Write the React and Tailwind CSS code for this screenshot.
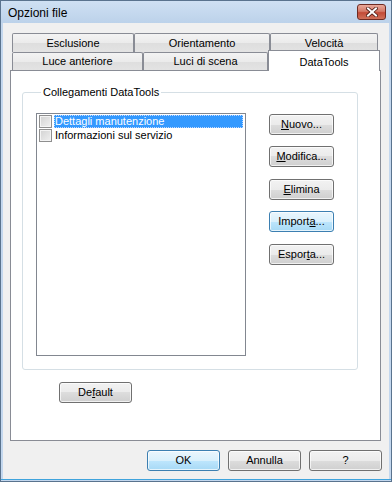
import React from "react";

const font = "font-['Liberation_Sans',Arial,sans-serif]";

const btnBase =
  "h-[21px] rounded-[3px] border text-[11px] leading-none text-black flex items-center justify-center shadow-[inset_0_0_0_1px_rgba(255,255,255,0.7)]";
const btnNormal =
  "border-[#707070] bg-[linear-gradient(#f2f2f2_0%,#ebebeb_50%,#dddddd_50%,#cfcfcf_100%)]";
const btnFocus =
  "border-[#3c7fb1] bg-[linear-gradient(#eaf6fd_0%,#d9f0fc_50%,#bee6fd_50%,#a7d9f5_100%)]";

const Btn = ({ children, focus, className = "" }) => (
  <div className={`${btnBase} ${focus ? btnFocus : btnNormal} ${className}`}>{children}</div>
);

const tabInactive =
  "h-full flex items-center justify-center border-t border-l border-r border-[#898c95] rounded-t-[2px] bg-[linear-gradient(#f3f3f3_0%,#ebebeb_50%,#dedede_50%,#e3e3e3_100%)] text-[11px] text-black";

const Check = () => (
  <div className="w-[13px] h-[13px] border border-[#8f8f8f] bg-[linear-gradient(135deg,#d2d2d2,#f0f0f0)] shadow-[inset_0_0_0_1px_#f4f4f4]" />
);

export default function App() {
  return (
    <div className={`w-[392px] h-[482px] border border-[#5a738e] bg-[#c3d7ee] flex flex-col ${font}`}>
      {/* Title bar */}
      <div className="h-[22px] flex items-start justify-between pl-[7px] pr-[5px] bg-[linear-gradient(#cfe0f3,#bcd2ea)]">
        <span className="text-[12px] leading-none mt-[6px] text-black">Opzioni file</span>
        <div className="mt-[3px] w-[29px] h-[16px] rounded-[3px] border border-[#6f2b22] bg-[linear-gradient(#e9a99a_0%,#d47a68_45%,#c24a36_55%,#d0715a_100%)] flex items-center justify-center">
          <svg width="12" height="10" viewBox="0 0 12 10">
            <path d="M2 1.5 L10 8.5 M10 1.5 L2 8.5" stroke="#4a1810" strokeWidth="3.6" strokeLinecap="square" />
            <path d="M2 1.5 L10 8.5 M10 1.5 L2 8.5" stroke="#ffffff" strokeWidth="2" strokeLinecap="square" />
          </svg>
        </div>
      </div>

      {/* Client area */}
      <div className="mx-[2px] h-[456px] bg-[#f0f0f0] flex flex-col pt-[10px] px-[7px]">
        {/* Tab control */}
        <div className="w-[371px] flex flex-col">
          <div className="flex ml-[2px] h-[19px]">
            <div className={`${tabInactive} w-[122px]`}>Esclusione</div>
            <div className={`${tabInactive} w-[136px]`}>Orientamento</div>
            <div className={`${tabInactive} w-[108px]`}>Velocità</div>
          </div>
          <div className="flex ml-[2px] h-[18px]">
            <div className={`${tabInactive} w-[131px]`}>Luce anteriore</div>
            <div className={`${tabInactive} w-[125px]`}>Luci di scena</div>
            <div className="relative z-10 -mt-[2px] h-[21px] w-[112px] bg-white border-t border-l border-r border-[#898c95] flex items-start justify-center pt-[3px] text-[11px] text-black">
              DataTools
            </div>
          </div>
          <div className="h-[371px] border border-[#898c95] bg-white flex flex-col">
            <fieldset className="ml-[11px] mt-[15px] w-[336px] h-[284px] border border-[#d5dfe5] rounded-[3px] px-[13px]">
              <legend className="ml-[5px] px-[2px] text-[11px] leading-[13px] text-black">
                Collegamenti DataTools
              </legend>
              <div className="flex mt-[14px] gap-[23px]">
                <div className="w-[210px] h-[243px] border border-[#828790] bg-white flex flex-col text-[11px] text-black">
                  <div className="flex items-center h-[14px] pl-[2px] pr-[2px]">
                    <Check />
                    <div className="ml-[2px] flex-1 h-[13px] bg-[#3399ff] outline outline-1 outline-dotted outline-[#c0d8ff] -outline-offset-1 text-white leading-[13px] pl-[1px]">
                      Dettagli manutenzione
                    </div>
                  </div>
                  <div className="flex items-center h-[14px] pl-[2px] pr-[2px]">
                    <Check />
                    <div className="ml-[2px] flex-1 h-[13px] leading-[13px] pl-[1px]">
                      Informazioni sul servizio
                    </div>
                  </div>
                </div>
                <div className="flex flex-col mt-[1px]">
                  <Btn className="w-[65px]">
                    <span><u>N</u>uovo...</span>
                  </Btn>
                  <Btn className="w-[65px] mt-[11px]">
                    <span><u>M</u>odifica...</span>
                  </Btn>
                  <Btn className="w-[65px] mt-[12px]">
                    <span><u>E</u>limina</span>
                  </Btn>
                  <Btn focus className="w-[65px] mt-[11px]">
                    <span>Import<u>a</u>...</span>
                  </Btn>
                  <Btn className="w-[65px] mt-[12px]">
                    <span>Espor<u>t</u>a...</span>
                  </Btn>
                </div>
              </div>
            </fieldset>
            <Btn className="w-[73px] ml-[48px] mt-[12px]">
              <span>De<u>f</u>ault</span>
            </Btn>
          </div>
        </div>

        {/* Bottom buttons */}
        <div className="flex justify-end gap-[8px] mt-[9px]">
          <Btn focus className="w-[73px]">OK</Btn>
          <Btn className="w-[73px]">Annulla</Btn>
          <Btn className="w-[73px]">?</Btn>
        </div>
      </div>
      <div className="flex-1 border-t border-[#3fa3dc]" />
    </div>
  );
}
